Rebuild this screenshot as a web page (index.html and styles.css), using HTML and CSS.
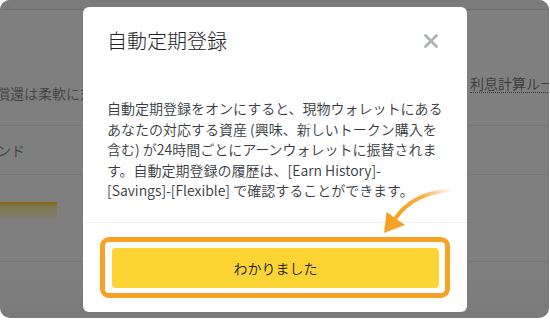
FILE: index.html
```html
<!DOCTYPE html>
<html lang="ja">
<head>
<meta charset="utf-8">
<title>自動定期登録</title>
<link rel="stylesheet" href="styles.css">
</head>
<body>
<div class="screen">
  <div class="bg">
    <div class="topbar"></div>
    <div class="row row1">
      <div class="cell-left"><span class="bg-text shift-l">償還は柔軟に対応します</span></div>
      <div class="cell-right"><span class="bg-link">利息計算ルール</span></div>
    </div>
    <div class="row row2">
      <span class="bg-text shift-s">ンド</span>
    </div>
    <div class="row row3">
      <div class="bar"></div>
    </div>
  </div>

  <div class="modal">
    <div class="modal-head">
      <h2 class="modal-title">自動定期登録</h2>
      <svg class="close" width="14" height="14" viewBox="0 0 14 14" aria-hidden="true">
        <path d="M1.5 1.5 L12.5 12.5 M12.5 1.5 L1.5 12.5" stroke="#adb2ba" stroke-width="2.8" stroke-linecap="round" fill="none"/>
      </svg>
    </div>
    <div class="modal-body">
      <p class="desc">自動定期登録をオンにすると、現物ウォレットにある<br>あなたの対応する資産 (興味、新しいトークン購入を<br>含む) が24時間ごとにアーンウォレットに振替されま<br>す。自動定期登録の履歴は、[Earn History]-<br>[Savings]-[Flexible] で確認することができます。</p>
    </div>
    <div class="modal-foot">
      <div class="highlight">
        <button class="btn">わかりました</button>
      </div>
    </div>
  </div>

  <svg class="arrow" width="549" height="318" viewBox="0 0 549 318" aria-hidden="true">
    <defs>
      <linearGradient id="ag" gradientUnits="userSpaceOnUse" x1="452" y1="190" x2="400" y2="216">
        <stop offset="0" stop-color="#f7a125" stop-opacity="0"/>
        <stop offset="0.5" stop-color="#f7a125" stop-opacity="0.85"/>
        <stop offset="1" stop-color="#f7a125" stop-opacity="1"/>
      </linearGradient>
    </defs>
    <path d="M453 190 Q413 192 395 219" stroke="url(#ag)" stroke-width="4" fill="none" stroke-linecap="round"/>
    <polygon points="384,233 386.5,212 405,225" fill="#f7a125"/>
  </svg>
</div>
</body>
</html>
```

FILE: styles.css
```css
* { box-sizing: border-box; }

html, body {
  margin: 0;
  padding: 0;
  background: #ffffff;
}

body {
  font-family: "Noto Sans CJK JP", "Noto Sans", sans-serif;
}

.screen {
  position: relative;
  width: 549px;
  height: 318px;
  border-radius: 10px;
  overflow: hidden;
  background: #7f7f7f;
}

.bg {
  width: 100%;
  height: 100%;
  background: linear-gradient(to bottom, #7f7f7f 0%, #7f7f7f 85%, #7a7a7a 100%);
}

.topbar {
  height: 10px;
  border-bottom: 1px solid #6c6c6c;
  background: #7b7b7b;
}

.row {
  border-bottom: 1px solid #767676;
}

.row1 {
  height: 116px;
  display: grid;
  grid-template-columns: 470px 1fr;
  align-items: end;
}

.cell-left {
  padding-bottom: 21px;
  white-space: nowrap;
}

.cell-right {
  padding-bottom: 31px;
  white-space: nowrap;
}

.bg-text {
  display: inline-block;
  font-size: 14px;
  line-height: 20px;
  color: #424242;
  font-weight: 350;
  white-space: nowrap;
}

.shift-l { margin-left: -4px; }
.shift-s { margin-left: -3px; }

.bg-link {
  display: inline-block;
  font-size: 14px;
  line-height: 17px;
  color: #3a3a3a;
  font-weight: 350;
  border-bottom: 1px dotted #3a3a3a;
}

.row2 {
  height: 49px;
  padding-top: 11px;
}

.row3 {
  height: 87px;
  padding-top: 27px;
}

.bar {
  width: 57px;
  height: 19px;
  border-top: 2px solid #8a6b0e;
  background: linear-gradient(to bottom, #7e7445 0%, #7f7a60 55%, #7f7f7f 100%);
}

.modal {
  position: absolute;
  left: 83px;
  top: 7px;
  width: 384px;
  height: 305px;
  background: #ffffff;
  border-radius: 6px;
  display: flex;
  flex-direction: column;
}

.modal-head {
  display: flex;
  align-items: center;
  justify-content: space-between;
  padding: 20px 29px 0 24px;
}

.modal-title {
  margin: 0;
  font-size: 20px;
  line-height: 28px;
  font-weight: 300;
  color: #1e2329;
}

.close {
  display: block;
}

.modal-body {
  padding: 43px 24px 0 24px;
  flex: 1;
  border-bottom: 1px solid #f3f3f3;
}

.desc {
  margin: 0;
  font-size: 14px;
  line-height: 20.5px;
  font-weight: 350;
  color: #363a40;
  white-space: nowrap;
}

.modal-foot {
  padding: 14px 17px 14px 17px;
}

.highlight {
  border: 5px solid #f7a125;
  border-radius: 9px;
  padding: 6px 6px 5px 7px;
}

.btn {
  display: block;
  width: 100%;
  height: 40px;
  border: none;
  border-radius: 4px;
  background: #fcd535;
  color: #1e2329;
  font-family: "Noto Sans CJK JP", "Noto Sans", sans-serif;
  font-size: 14px;
  font-weight: 350;
  padding: 0;
}

.arrow {
  position: absolute;
  left: 0;
  top: 0;
  pointer-events: none;
}
```
